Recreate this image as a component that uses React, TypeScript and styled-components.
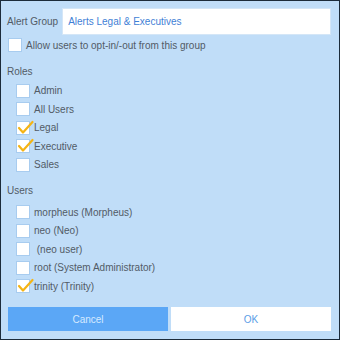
import styled, { createGlobalStyle } from 'styled-components';

const GlobalStyle = createGlobalStyle`
  html, body {
    margin: 0;
    padding: 0;
    background: #1c2b3a;
  }
  * {
    box-sizing: border-box;
  }
`;

const Dialog = styled.div`
  width: 340px;
  height: 340px;
  border: 1px solid #1c2b3a;
  background: #c0ddf8;
  font-family: 'Liberation Sans', Arial, sans-serif;
  font-size: 10px;
  color: #525b66;
  padding: 7px 7px 0 6px;
  display: flex;
  flex-direction: column;
`;

const FieldRow = styled.div`
  display: flex;
  align-items: center;
  height: 27px;
  gap: 4px;
`;

const TextInput = styled.input`
  flex: 1;
  height: 27px;
  border: 1px solid #d4e6f7;
  background: #fff;
  color: #3f7fd6;
  font-family: inherit;
  font-size: 10px;
  padding: 0 5px;
  margin-right: 1px;
  outline: none;
`;

const SectionLabel = styled.div<{ $top: number }>`
  margin-top: ${({ $top }) => $top}px;
  height: 18px;
  line-height: 18px;
`;

const OptionList = styled.div<{ $indent: number; $top?: number }>`
  display: flex;
  flex-direction: column;
  padding-left: ${({ $indent }) => $indent}px;
  margin-top: ${({ $top }) => $top ?? 0}px;
`;

const Option = styled.label`
  display: flex;
  align-items: center;
  height: 18.5px;
  gap: 4px;
  cursor: pointer;
`;

const Box = styled.span`
  position: relative;
  width: 14px;
  height: 14px;
  flex: none;
  background: #fff;
  border: 1px solid #a8ccef;
`;

const Tick = styled.svg`
  position: absolute;
  left: 0;
  top: -3px;
  overflow: visible;
`;

const ButtonRow = styled.div`
  display: grid;
  grid-template-columns: 1fr 1fr;
  gap: 3px;
  margin-top: auto;
  margin-bottom: 8px;
  padding-left: 1px;
  padding-right: 1px;
`;

const DialogButton = styled.button<{ $primary?: boolean }>`
  height: 24px;
  border: none;
  font-family: inherit;
  font-size: 10px;
  background: ${({ $primary }) => ($primary ? '#5ba7f6' : '#ffffff')};
  color: ${({ $primary }) => ($primary ? '#d6eaff' : '#5b9de6')};
  cursor: pointer;
`;

function Check({ label, checked }: { label: string; checked?: boolean }) {
  return (
    <Option>
      <Box>
        {checked && (
          <Tick width="16" height="16" viewBox="0 0 16 16">
            <path
              d="M2 9 L6 13.5 L15.5 3"
              fill="none"
              stroke="#f5b414"
              strokeWidth="2.2"
              strokeLinecap="round"
              strokeLinejoin="round"
            />
          </Tick>
        )}
      </Box>
      <span>{label}</span>
    </Option>
  );
}

const roles = [
  { label: 'Admin' },
  { label: 'All Users' },
  { label: 'Legal', checked: true },
  { label: 'Executive', checked: true },
  { label: 'Sales' },
];

const users = [
  { label: 'morpheus (Morpheus)' },
  { label: 'neo (Neo)' },
  { label: '\u00a0(neo user)' },
  { label: 'root (System Administrator)' },
  { label: 'trinity (Trinity)', checked: true },
];

export default function App() {
  return (
    <>
      <GlobalStyle />
      <Dialog>
        <FieldRow>
          <span>Alert Group</span>
          <TextInput defaultValue="Alerts Legal & Executives" />
        </FieldRow>
        <OptionList $indent={1} $top={1}>
          <Check label="Allow users to opt-in/-out from this group" />
        </OptionList>
        <SectionLabel $top={8}>Roles</SectionLabel>
        <OptionList $indent={9} $top={1}>
          {roles.map((r) => (
            <Check key={r.label} {...r} />
          ))}
        </OptionList>
        <SectionLabel $top={8}>Users</SectionLabel>
        <OptionList $indent={9} $top={3}>
          {users.map((u) => (
            <Check key={u.label} {...u} />
          ))}
        </OptionList>
        <ButtonRow>
          <DialogButton $primary>Cancel</DialogButton>
          <DialogButton>OK</DialogButton>
        </ButtonRow>
      </Dialog>
    </>
  );
}
